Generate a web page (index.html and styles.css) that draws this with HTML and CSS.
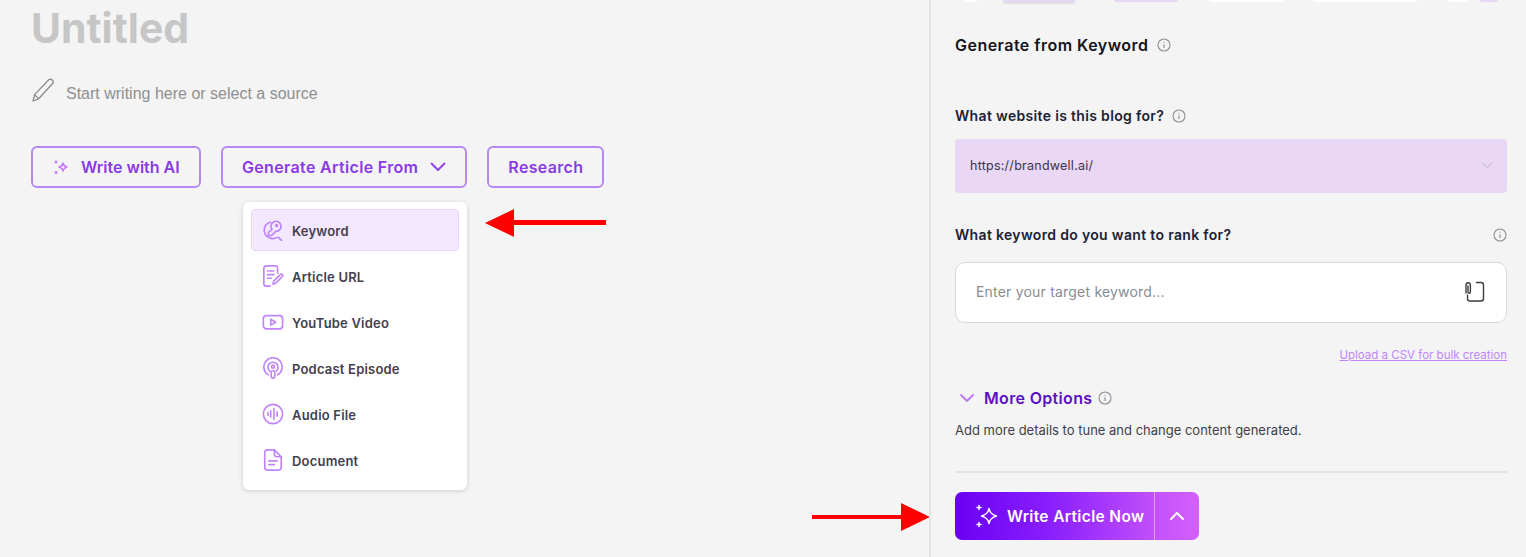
FILE: index.html
```html
<!DOCTYPE html>
<html lang="en">
<head>
    <meta charset="UTF-8">
    <meta name="viewport" content="width=device-width, initial-scale=1.0">
    <title>Untitled</title>
    <link rel="stylesheet" href="styles.css">
</head>
<body>
    <div class="app">
        <main class="editor">
            <h1 class="doc-title">Untitled</h1>
            <div class="start-row">
                <svg class="pencil" viewBox="0 0 24 24" width="24" height="24" fill="none" stroke="#8b8b8b" stroke-width="1.3" stroke-linejoin="round"><path d="M2 23l1.6-6.4L17.8 1.8c1-1 2.6-.6 3.5.3s1.2 2.4.3 3.4L7.6 20.8z"/><path d="M3.6 16.6l4 4.2"/></svg>
                <span>Start writing here or select a source</span>
            </div>
            <div class="actions">
                <button class="outline-btn ai-btn">
                    <svg viewBox="0 0 16 18" width="16" height="18" fill="none" stroke="#c77dff" stroke-width="1.5" stroke-linejoin="round"><path d="M10 5c.5 2.3 1.4 3.3 4 4-2.6.7-3.5 1.7-4 4-.5-2.3-1.4-3.3-4-4 2.6-.7 3.5-1.7 4-4z"/><path d="M3 2.5v3M1.5 4h3M3 13v3M1.5 14.5h3"/></svg>
                    Write with AI
                </button>
                <button class="outline-btn">
                    Generate Article From
                    <svg viewBox="0 0 16 10" width="16" height="10" fill="none" stroke="#8f3fe8" stroke-width="1.8" stroke-linecap="round" stroke-linejoin="round"><path d="M1.5 1.5L8 8l6.5-6.5"/></svg>
                </button>
                <button class="outline-btn">Research</button>
            </div>
            <div class="source-menu">
                <div class="menu-item active">
                    <svg viewBox="0 0 24 24" width="24" height="24" fill="none" stroke="#c084fc" stroke-width="1.8" stroke-linecap="round" stroke-linejoin="round"><path d="M9 3.5A9 9 0 0 0 8 20.5a9 9 0 0 0 8.5-.5"/><path d="M18 20l3.5 3.5"/><path d="M11 11.5A5.5 5.5 0 1 1 15 13.5L10.5 18H7v-3.5z"/><circle cx="16" cy="7" r="1"/></svg>
                    <span>Keyword</span>
                </div>
                <div class="menu-item">
                    <svg viewBox="0 0 24 24" width="24" height="24" fill="none" stroke="#c084fc" stroke-width="1.8" stroke-linecap="round" stroke-linejoin="round"><path d="M17 9V3.5A2.5 2.5 0 0 0 14.5 1h-10A2.5 2.5 0 0 0 2 3.5v17A2.5 2.5 0 0 0 4.5 23H9"/><path d="M6 6.5h7M6 10.5h7M6 14.5h4"/><path d="M12 21l.8-3.5 7-7c.8-.8 1.8-.8 2.4-.1s.6 1.6-.2 2.4l-7 7z"/></svg>
                    <span>Article URL</span>
                </div>
                <div class="menu-item">
                    <svg viewBox="0 0 24 24" width="24" height="24" fill="none" stroke="#c084fc" stroke-width="1.8" stroke-linecap="round" stroke-linejoin="round"><rect x="1.5" y="5" width="21" height="14.5" rx="3.5"/><path d="M9.5 9l5.5 3.2-5.5 3.2z"/></svg>
                    <span>YouTube Video</span>
                </div>
                <div class="menu-item">
                    <svg viewBox="0 0 24 24" width="24" height="24" fill="none" stroke="#c084fc" stroke-width="1.8" stroke-linecap="round" stroke-linejoin="round"><path d="M7 19.5a10 10 0 1 1 10 0"/><path d="M8.5 15.5a5.5 5.5 0 1 1 7 0"/><circle cx="12" cy="10.5" r="1.6"/><rect x="10" y="15" width="4" height="8" rx="2"/></svg>
                    <span>Podcast Episode</span>
                </div>
                <div class="menu-item">
                    <svg viewBox="0 0 24 24" width="24" height="24" fill="none" stroke="#c084fc" stroke-width="1.8" stroke-linecap="round"><circle cx="12" cy="12" r="10.5"/><path d="M6.5 10.5v3M9.5 8.5v7M13 6v12M16.5 9.5v5"/></svg>
                    <span>Audio File</span>
                </div>
                <div class="menu-item">
                    <svg viewBox="0 0 24 24" width="24" height="24" fill="none" stroke="#c084fc" stroke-width="1.8" stroke-linecap="round" stroke-linejoin="round"><path d="M13.5 1H6a3 3 0 0 0-3 3v16a3 3 0 0 0 3 3h12a3 3 0 0 0 3-3V8.5z"/><path d="M13.5 1v4.5a3 3 0 0 0 3 3H21"/><path d="M7.5 13h9M7.5 17h6"/></svg>
                    <span>Document</span>
                </div>
            </div>
            <svg class="arrow arrow-menu" viewBox="0 0 121 30" width="121" height="30"><path d="M0 15L29 1v11h92v5H29v12z" fill="#ff0000"/></svg>
            <svg class="arrow arrow-submit" viewBox="0 0 118 28" width="118" height="28"><path d="M118 14L89 0v12H0v4h89v12z" fill="#ff0000"/></svg>
        </main>
        <aside class="panel">
            <div class="tab-strip">
                <span class="tab-bit bit-white bit-f"></span>
                <span class="tab-bit bit-lilac bit-a"></span>
                <span class="tab-bit bit-lilac bit-b"></span>
                <span class="tab-bit bit-white bit-c"></span>
                <span class="tab-bit bit-white bit-d"></span>
                <span class="tab-bit bit-white bit-g"></span>
                <span class="tab-bit bit-lilac bit-e"></span>
            </div>
            <div class="panel-head">
                <h2>Generate from Keyword</h2>
                <svg viewBox="0 0 14 14" width="14" height="14" fill="none" stroke="#8d8f96" stroke-width="1.1"><circle cx="7" cy="7" r="6"/><path d="M7 6.2v3.8M7 3.8v1"/></svg>
            </div>
            <div class="field-label site-label">
                <span>What website is this blog for?</span>
                <svg viewBox="0 0 14 14" width="14" height="14" fill="none" stroke="#8d8f96" stroke-width="1.1"><circle cx="7" cy="7" r="6"/><path d="M7 6.2v3.8M7 3.8v1"/></svg>
            </div>
            <div class="site-select">
                <span>https://brandwell.ai/</span>
                <svg viewBox="0 0 12 8" width="12" height="8" fill="none" stroke="#cfc4d8" stroke-width="1.3"><path d="M1 1.5l5 5 5-5"/></svg>
            </div>
            <div class="field-label keyword-label">
                <span>What keyword do you want to rank for?</span>
                <svg viewBox="0 0 14 14" width="14" height="14" fill="none" stroke="#8d8f96" stroke-width="1.1"><circle cx="7" cy="7" r="6"/><path d="M7 6.2v3.8M7 3.8v1"/></svg>
            </div>
            <div class="keyword-box">
                <span>Enter your target keyword...</span>
                <svg viewBox="0 0 20 22" width="20" height="22" fill="none" stroke="#3c3c3c" stroke-width="1.4" stroke-linecap="round"><path d="M11.5 1.5H16a2.5 2.5 0 0 1 2.5 2.5v13.5A2.5 2.5 0 0 1 16 20H5a2.5 2.5 0 0 1-2.5-2.5V14"/><path d="M1 12V4a2.2 2.2 0 0 1 4.4 0v7a1.2 1.2 0 0 1-2.4 0V5"/></svg>
            </div>
            <a class="csv-link" href="#">Upload a CSV for bulk creation</a>
            <div class="more-row">
                <svg viewBox="0 0 16 10" width="16" height="10" fill="none" stroke="#b779f5" stroke-width="1.8" stroke-linecap="round" stroke-linejoin="round"><path d="M2 2l6 6 6-6"/></svg>
                <span>More Options</span>
                <svg class="more-info" viewBox="0 0 14 14" width="14" height="14" fill="none" stroke="#8d8f96" stroke-width="1.1"><circle cx="7" cy="7" r="6"/><path d="M7 6.2v3.8M7 3.8v1"/></svg>
            </div>
            <p class="more-note">Add more details to tune and change content generated.</p>
            <hr class="divider">
            <div class="submit-btn">
                <div class="submit-main">
                    <svg viewBox="0 0 24 24" width="24" height="24" fill="none" stroke="#fff" stroke-width="1.5" stroke-linejoin="round" stroke-linecap="round"><path d="M14 4.5c.9 4.2 2.5 6 7.5 7.5-5 1.5-6.6 3.3-7.5 7.5-.9-4.2-2.5-6-7.5-7.5 5-1.5 6.6-3.3 7.5-7.5z"/><path d="M4 1.5v4M2 3.5h4M4 18.5v4M2 20.5h4"/></svg>
                    <span>Write Article Now</span>
                </div>
                <div class="submit-more">
                    <svg viewBox="0 0 16 10" width="16" height="10" fill="none" stroke="#fff" stroke-width="2" stroke-linecap="round" stroke-linejoin="round"><path d="M2 8l6-6 6 6"/></svg>
                </div>
            </div>
        </aside>
    </div>
</body>
</html>
```

FILE: styles.css
```css
* {
    box-sizing: border-box;
}
html, body {
    margin: 0;
    height: 100%;
    overflow: hidden;
}
body {
    font-family: Inter, "Liberation Sans", sans-serif;
    background-color: #f4f4f4;
}
.app {
    display: flex;
    height: 557px;
}
.editor {
    position: relative;
    width: 929px;
    padding: 5px 31px 0;
    background-color: #f4f4f5;
}
.doc-title {
    margin: 0;
    font-size: 41px;
    line-height: 46px;
    font-weight: 700;
    color: #c6c6c6;
}
.start-row {
    display: flex;
    align-items: center;
    gap: 11px;
    margin-top: 34px;
    color: #8f8f8f;
    font-family: "Liberation Sans", sans-serif;
    font-size: 16px;
}
.pencil {
    margin-top: -8px;
}
.actions {
    display: flex;
    gap: 20px;
    margin-top: 43px;
}
.outline-btn {
    display: flex;
    align-items: center;
    gap: 12px;
    height: 42px;
    padding: 0 19px;
    background: transparent;
    border: 2px solid #b48af0;
    border-radius: 6px;
    color: #8a3ae6;
    font-family: inherit;
    font-size: 16px;
    font-weight: 600;
    letter-spacing: 0.33px;
}
.ai-btn {
    width: 170px;
    padding-left: 20px;
    letter-spacing: 0;
}
.source-menu {
    position: absolute;
    left: 243px;
    top: 202px;
    width: 224px;
    height: 288px;
    padding: 7px 8px;
    background-color: #fff;
    border-radius: 6px;
    box-shadow: 0 1px 5px rgba(0,0,0,0.16);
}
.menu-item {
    display: flex;
    align-items: center;
    gap: 8px;
    height: 42px;
    margin-bottom: 4px;
    padding: 0 10px;
    border: 1px solid transparent;
    border-radius: 4px;
    color: #44404e;
    font-size: 13px;
    font-weight: 600;
    letter-spacing: 0.2px;
}
.menu-item svg {
    flex: none;
    width: 22px;
    height: 22px;
}
.menu-item span {
    padding-top: 2px;
}
.menu-item.active {
    background-color: #f3e8ff;
    border-color: #e9d5ff;
}
.arrow {
    position: absolute;
}
.arrow-menu {
    left: 485px;
    top: 208px;
}
.arrow-submit {
    left: 812px;
    top: 503px;
}
.panel {
    position: relative;
    width: 597px;
    padding: 0 19px 0 24px;
    background-color: #f4f4f4;
    border-left: 2px solid #e3e3e3;
}
.tab-strip {
    position: absolute;
    top: 0;
    left: 0;
    width: 100%;
}
.tab-bit {
    position: absolute;
    top: 0;
    height: 2px;
    border-radius: 0 0 4px 4px;
}
.bit-lilac {
    background-color: #e6d8f5;
}
.bit-white {
    background-color: #fff;
}
.bit-a { left: 72px; width: 72px; box-shadow: 0 1px 3px rgba(0,0,0,0.2); }
.bit-b { left: 183px; width: 64px; }
.bit-c { left: 278px; width: 74px; }
.bit-d { left: 382px; width: 104px; }
.bit-e { left: 549px; width: 18px; }
.bit-f { left: 32px; width: 14px; }
.bit-g { left: 517px; width: 20px; }
.panel-head {
    display: flex;
    align-items: center;
    gap: 9px;
    padding-top: 34px;
}
.panel-head h2 {
    margin: 0;
    font-size: 16px;
    line-height: 22px;
    font-weight: 600;
    letter-spacing: 0.47px;
    color: #14141c;
}
.field-label {
    display: flex;
    align-items: center;
    gap: 8px;
    color: #1c2236;
    font-size: 14px;
    line-height: 20px;
    font-weight: 600;
    letter-spacing: 0.33px;
}
.site-label {
    margin-top: 50px;
}
.site-select {
    display: flex;
    align-items: center;
    justify-content: space-between;
    height: 54px;
    margin-top: 13px;
    padding: 0 14px 2px 15px;
    background-color: #e9d7f5;
    border-radius: 4px;
    color: #3a3442;
    font-size: 12.5px;
    letter-spacing: 0.25px;
}
.keyword-label {
    justify-content: space-between;
    margin-top: 32px;
}
.keyword-box {
    display: flex;
    align-items: center;
    justify-content: space-between;
    height: 61px;
    margin-top: 17px;
    padding: 0 21px 2px 20px;
    background-color: #fff;
    border: 1px solid #d9d9d9;
    border-radius: 10px;
    color: #8a8d94;
    font-size: 14px;
    letter-spacing: 0.2px;
}
.csv-link {
    display: block;
    margin-top: 24px;
    text-align: right;
    color: #c084fc;
    font-size: 11.5px;
    line-height: 16px;
}
.more-row {
    display: flex;
    align-items: center;
    gap: 9px;
    margin-top: 24px;
    padding-left: 4px;
    color: #5b10c4;
    font-size: 16px;
    line-height: 22px;
    font-weight: 600;
    letter-spacing: 0.33px;
}
.more-info {
    margin-left: -3px;
}
.more-note {
    margin: 12px 0 0;
    color: #3f3f46;
    font-size: 13px;
    line-height: 18px;
}
.divider {
    height: 2px;
    margin: 32px 0 0;
    border: 0;
    background-color: #e4e4e4;
}
.submit-btn {
    display: flex;
    width: 244px;
    height: 48px;
    margin-top: 19px;
    border-radius: 7px;
    overflow: hidden;
    color: #fff;
    background: linear-gradient(90deg, #6a00f4 0%, #8a20fb 40%, #c653fb 85%, #d460fa 100%);
}
.submit-main {
    display: flex;
    align-items: center;
    gap: 8px;
    flex: 1;
    padding-left: 20px;
    font-size: 15.5px;
    font-weight: 600;
    letter-spacing: 0.35px;
    border-right: 1px solid rgba(255,255,255,0.45);
}
.submit-more {
    display: flex;
    align-items: center;
    justify-content: center;
    width: 44px;
}
```
